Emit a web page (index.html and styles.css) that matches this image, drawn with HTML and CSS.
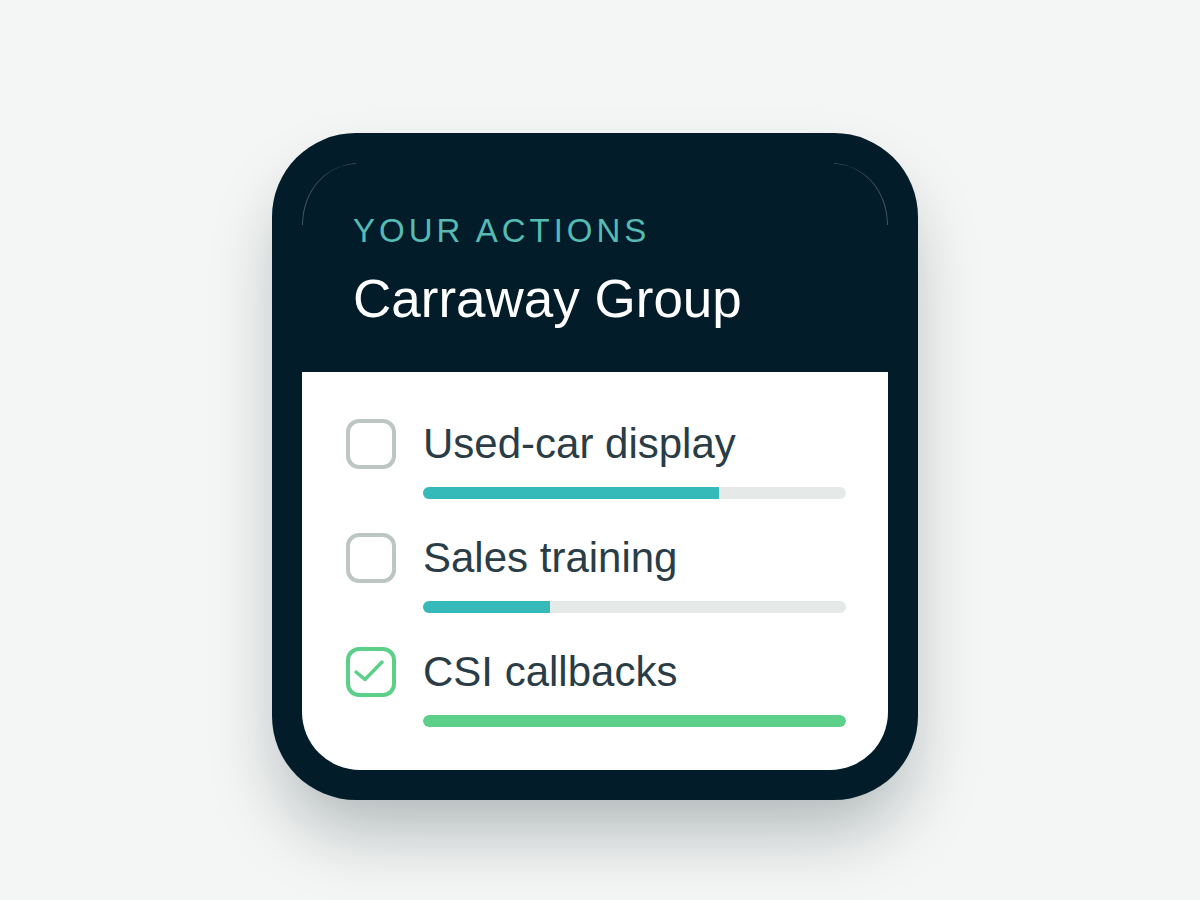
FILE: index.html
```html
<!DOCTYPE html>
<html lang="en">
<head>
    <meta charset="UTF-8">
    <meta name="viewport" content="width=device-width, initial-scale=1.0">
    <title>Your Actions</title>
    <link rel="stylesheet" href="styles.css">
</head>
<body>

    <div class="device">
        <div class="screen">
            <div class="header">
                <div class="label">YOUR ACTIONS</div>
                <h1 class="title">Carraway Group</h1>
            </div>

            <ul class="actions">
                <li class="action">
                    <span class="check"></span>
                    <span class="name">Used-car display</span>
                    <div class="bar"><div class="fill" style="width: 70%;"></div></div>
                </li>
                <li class="action">
                    <span class="check"></span>
                    <span class="name">Sales training</span>
                    <div class="bar"><div class="fill" style="width: 30%;"></div></div>
                </li>
                <li class="action done">
                    <span class="check">
                        <svg viewBox="0 0 42 42" width="42" height="42">
                            <polyline points="6,21 15,28.5 32,11" fill="none" stroke="#5ccf88" stroke-width="3.5" stroke-linecap="round" stroke-linejoin="round"/>
                        </svg>
                    </span>
                    <span class="name">CSI callbacks</span>
                    <div class="bar"><div class="fill" style="width: 100%;"></div></div>
                </li>
            </ul>
        </div>
    </div>

</body>
</html>
```

FILE: styles.css
```css
body {
    margin: 0;
    height: 900px;
    padding-right: 10px;
    font-family: "Liberation Sans", Arial, sans-serif;
    background-color: #f4f6f5;
    display: flex;
    justify-content: center;
    align-items: flex-start;
}
.device {
    margin-top: 133px;
    width: 646px;
    height: 667px;
    box-sizing: border-box;
    padding: 30px;
    background: #021d29;
    border-radius: 84px;
    box-shadow: 0 40px 70px -10px rgba(0, 20, 30, 0.28);
}
.screen {
    position: relative;
    height: 100%;
    border-radius: 58px;
    overflow: hidden;
    background: #021d29;
    display: flex;
    flex-direction: column;
}
.screen::before,
.screen::after {
    content: "";
    position: absolute;
    top: 0;
    width: 54px;
    height: 62px;
    box-sizing: border-box;
    border-top: 1px solid rgba(255, 255, 255, 0.25);
}
.screen::before {
    left: 0;
    border-left: 1px solid rgba(255, 255, 255, 0.25);
    border-top-left-radius: 54px 62px;
}
.screen::after {
    right: 0;
    border-right: 1px solid rgba(255, 255, 255, 0.25);
    border-top-right-radius: 54px 62px;
}
.header {
    padding: 51px 50px 47px 51px;
}
.label {
    font-size: 33px;
    line-height: 1;
    letter-spacing: 4px;
    color: #55bbb4;
}
.title {
    margin: 25px 0 0;
    font-size: 53px;
    line-height: 1;
    font-weight: normal;
    color: #ffffff;
}
.actions {
    flex: 1;
    list-style: none;
    margin: 0;
    padding: 47px 42px 43px 44px;
    background: #ffffff;
    display: flex;
    flex-direction: column;
    gap: 34px;
}
.action {
    display: grid;
    grid-template-columns: 50px 1fr;
    column-gap: 27px;
    row-gap: 18px;
    align-items: center;
}
.check {
    width: 50px;
    height: 50px;
    box-sizing: border-box;
    border: 4px solid #bcc6c3;
    border-radius: 13px;
}
.check svg {
    display: block;
}
.done .check {
    border-color: #5ccf88;
}
.name {
    font-size: 42px;
    line-height: 50px;
    color: #2a3d47;
}
.bar {
    grid-column: 2;
    height: 12px;
    border-radius: 6px;
    background: #e5e9e8;
    overflow: hidden;
}
.fill {
    height: 100%;
    background: #35b9b9;
}
.done .fill {
    background: #5ccf88;
    border-radius: 6px;
}
```
